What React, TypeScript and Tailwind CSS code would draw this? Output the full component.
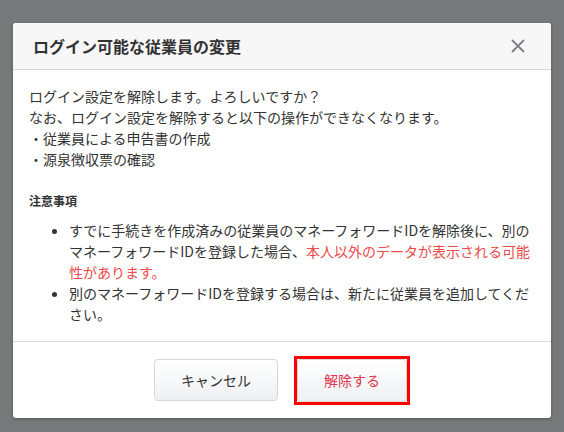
import React from "react";

export default function App() {
  const font = { fontFamily: '"Noto Sans CJK JP", "Noto Sans", sans-serif' };
  return (
    <div
      className="w-[564px] h-[432px] bg-[#77787a] pt-[23px] pl-[13px] overflow-hidden"
      style={font}
    >
      <div className="w-[538px] h-[395px] bg-white rounded-[3px] shadow-[0_1px_3px_rgba(0,0,0,0.3)] flex flex-col overflow-hidden">
        <div className="h-[47px] shrink-0 bg-[#f7f7f8] border-b border-[#d5d7db] flex items-center justify-between pl-[20px] pr-[25px]">
          <h1 className="text-[16px] font-bold text-[#333]">ログイン可能な従業員の変更</h1>
          <svg width="16" height="16" viewBox="0 0 16 16" className="text-[#7b7f86]">
            <path d="M2 2 L14 14 M14 2 L2 14" stroke="currentColor" strokeWidth="1.8" fill="none" />
          </svg>
        </div>
        <div className="flex-1 px-[16px] pt-[16px] text-[14px] leading-[21px] text-[#333]">
          <p>ログイン設定を解除します。よろしいですか？</p>
          <p>なお、ログイン設定を解除すると以下の操作ができなくなります。</p>
          <p>・従業員による申告書の作成</p>
          <p>・源泉徴収票の確認</p>
          <p className="mt-[22px] text-[12px] leading-[18px] font-bold">注意事項</p>
          <ul className="list-disc pl-[40px] mt-[10px]">
            <li>
              すでに手続きを作成済みの従業員のマネーフォワードIDを解除後に、別のマネーフォワードIDを登録した場合、
              <span className="text-[#ec4b4b]">本人以外のデータが表示される可能性があります。</span>
            </li>
            <li>別のマネーフォワードIDを登録する場合は、新たに従業員を追加してください。</li>
          </ul>
        </div>
        <div className="h-[77px] shrink-0 border-t border-[#d9d9d9] flex items-center justify-center gap-[16px]">
          <button className="h-[42px] px-[26px] rounded-[4px] border border-[#d4d7dc] bg-gradient-to-b from-white to-[#eef0f3] text-[14px] text-[#333]">
            キャンセル
          </button>
          <div className="border-[3px] border-[#ff0000]">
            <button className="block h-[43px] px-[26px] rounded-[4px] border border-[#d4d7dc] bg-gradient-to-b from-white to-[#eef0f3] text-[14px] text-[#e0364e]">
              解除する
            </button>
          </div>
        </div>
      </div>
    </div>
  );
}
